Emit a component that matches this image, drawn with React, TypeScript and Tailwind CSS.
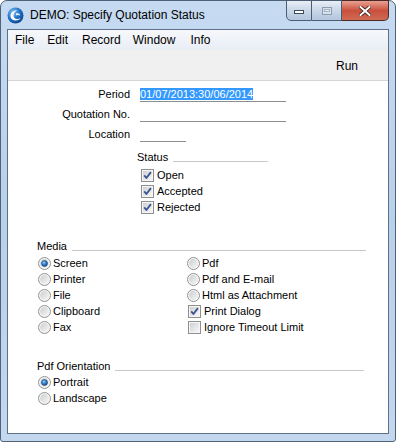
import React from "react";

const ui = "font-['Liberation_Sans',Arial,sans-serif]";

function CheckBox({ checked }: { checked: boolean }) {
  return (
    <svg width="13" height="13" viewBox="0 0 13 13" className="shrink-0">
      <defs>
        <linearGradient id="cbInner" x1="0" y1="0" x2="1" y2="1">
          <stop offset="0" stopColor="#cfd1d3" />
          <stop offset="1" stopColor="#f7f7f7" />
        </linearGradient>
      </defs>
      <rect x="0.5" y="0.5" width="12" height="12" fill="#f6f6f6" stroke="#8e8f8f" />
      <rect x="2" y="2" width="9" height="9" fill="url(#cbInner)" />
      {checked && (
        <path d="M3.2 6.4 L5.4 9 L9.9 3.2" fill="none" stroke="#3f5591" strokeWidth="1.9" strokeLinejoin="round" />
      )}
    </svg>
  );
}

function Radio({ checked }: { checked: boolean }) {
  return (
    <svg width="13" height="13" viewBox="0 0 13 13" className="shrink-0">
      <defs>
        <linearGradient id="rdInner" x1="0" y1="0" x2="1" y2="1">
          <stop offset="0" stopColor="#cbcdcf" />
          <stop offset="1" stopColor="#f6f6f6" />
        </linearGradient>
        <radialGradient id="rdDot" cx="0.4" cy="0.35" r="0.7">
          <stop offset="0" stopColor="#9ed0f5" />
          <stop offset="0.5" stopColor="#2e7dcc" />
          <stop offset="1" stopColor="#124b8a" />
        </radialGradient>
      </defs>
      <circle cx="6.5" cy="6.5" r="6" fill="#f4f4f4" stroke="#929394" />
      <circle cx="6.5" cy="6.5" r="4.4" fill="url(#rdInner)" />
      {checked && <circle cx="6.5" cy="6.5" r="3" fill="url(#rdDot)" stroke="#1b3f6c" strokeWidth="0.6" />}
    </svg>
  );
}

function SectionHead({ title, lineWidth }: { title: string; lineWidth: number }) {
  return (
    <div className="flex items-start h-[13px]">
      <span className="leading-[13px]">{title}</span>
      <div className="h-px bg-[#c8c8c8] mt-[10px] ml-[5px]" style={{ width: lineWidth }} />
    </div>
  );
}

function FieldRow({ label, width, children }: { label: string; width: number; children?: React.ReactNode }) {
  return (
    <div className="flex items-end h-[20px]">
      <span className="w-[122px] text-right leading-[13px] mb-px">{label}</span>
      <div className="ml-[10px] h-[14px] border-b border-[#8d8d8d] leading-[13px]" style={{ width }}>
        {children}
      </div>
    </div>
  );
}

function CheckRow({ label, checked }: { label: string; checked: boolean }) {
  return (
    <div className="flex items-center h-[16px]">
      <CheckBox checked={checked} />
      <span className="ml-[3px] leading-[13px]">{label}</span>
    </div>
  );
}

function RadioRow({ label, checked }: { label: string; checked: boolean }) {
  return (
    <div className="flex items-center h-[16px]">
      <Radio checked={checked} />
      <span className="ml-[2px] leading-[13px]">{label}</span>
    </div>
  );
}

function AppIcon() {
  return (
    <svg width="17" height="17" viewBox="0 0 17 17">
      <defs>
        <radialGradient id="logo" cx="0.35" cy="0.3" r="0.8">
          <stop offset="0" stopColor="#7fc0f5" />
          <stop offset="0.55" stopColor="#1e6fc4" />
          <stop offset="1" stopColor="#0b3f85" />
        </radialGradient>
      </defs>
      <circle cx="8.5" cy="8.5" r="8" fill="url(#logo)" />
      <path d="M3.5 9.5 C3.2 5.5 6.8 3 10.5 3.6 C7.6 4.4 6.2 6.6 6.6 9.2 C7 11.8 10 12.9 13.6 11.3 C11.8 14.2 4 14.6 3.5 9.5 Z" fill="#ffffff" />
      <path d="M9 6.6 C10.8 5.8 13 6.8 13.2 8.6 C12 7.8 10.4 7.6 9 8.4 Z" fill="#e8f3fc" />
    </svg>
  );
}

function CaptionButtons() {
  return (
    <div className="absolute top-[-1px] right-[6px] flex h-[21px]">
      <div className="w-[26px] h-full border border-[#4b5d74] rounded-bl-[5px] bg-gradient-to-b from-[#e8eef6] via-[#c9d7e8] to-[#b3c6dd] flex items-center justify-center">
        <div className="w-[10px] h-[4px] bg-white border border-[#3c4a5c] mt-[3px]" />
      </div>
      <div className="w-[30px] h-full border-y border-r border-[#4b5d74] bg-gradient-to-b from-[#e8eef6] via-[#c9d7e8] to-[#b3c6dd] flex items-center justify-center">
        <div className="w-[10px] h-[8px] border border-[#8e9cb0] bg-[#d7e1ee] flex items-center justify-center">
          <div className="w-[6px] h-[3px] border border-[#a6b3c4] bg-[#e8eef6]" />
        </div>
      </div>
      <div className="w-[47px] h-full border-y border-r border-[#4a2a26] rounded-br-[5px] bg-gradient-to-b from-[#e8a092] via-[#c9503e] to-[#d06a52] flex items-center justify-center">
        <svg width="12" height="10" viewBox="0 0 12 10">
          <path d="M1.5 1 L10.5 9 M10.5 1 L1.5 9" stroke="#3a1f1a" strokeWidth="3.6" strokeLinecap="square" />
          <path d="M1.5 1 L10.5 9 M10.5 1 L1.5 9" stroke="#ffffff" strokeWidth="2" strokeLinecap="square" />
        </svg>
      </div>
    </div>
  );
}

export default function App() {
  return (
    <div className={`${ui} w-[396px] h-[442px] bg-white text-black`}>
      <div className="relative w-[396px] h-[442px] rounded-t-[7px] rounded-b-[3px] border border-[#4f6276] bg-gradient-to-b from-[#c6dbf2] via-[#b9d0ea] to-[#c3d8ef] flex flex-col">
        {/* title bar */}
        <div className="h-[28px] flex items-start shrink-0">
          <div className="ml-[6px] mt-[6px]">
            <AppIcon />
          </div>
          <span className="ml-[6px] mt-[7px] text-[12px] leading-[15px] text-black">DEMO: Specify Quotation Status</span>
        </div>
        <CaptionButtons />

        {/* inner window */}
        <div className="mx-[6px] mb-[7px] flex-1 border border-[#5e7088] flex flex-col bg-white">
          <div className="h-[20px] bg-gradient-to-b from-[#f6f8fb] to-[#e9eef5] flex items-center text-[12px] leading-[15px] shrink-0">
            <span className="ml-[7px]">File</span>
            <span className="ml-[13px]">Edit</span>
            <span className="ml-[14px]">Record</span>
            <span className="ml-[12px]">Window</span>
            <span className="ml-[15px]">Info</span>
          </div>
          <div className="h-[31px] bg-[#f0f0f0] border-b border-[#d5d5d5] flex items-center justify-end shrink-0 text-[12px]">
            <span className="mr-[30px] mt-[1px]">Run</span>
          </div>

          <div className="flex-1 bg-white text-[11px] pt-px">
            <FieldRow label="Period" width={146}>
              <span className="bg-[#3399ff] text-white">01/07/2013:30/06/2014</span>
            </FieldRow>
            <FieldRow label="Quotation No." width={146} />
            <FieldRow label="Location" width={46} />

            <div className="ml-[129px] mt-[9px]">
              <SectionHead title="Status" lineWidth={95} />
              <div className="ml-[4px] mt-[3px]">
                <CheckRow label="Open" checked />
                <CheckRow label="Accepted" checked />
                <CheckRow label="Rejected" checked />
              </div>
            </div>

            <div className="ml-[29px] mt-[25px]">
              <SectionHead title="Media" lineWidth={294} />
              <div className="flex mt-[2px] ml-px">
                <div className="w-[149px]">
                  <RadioRow label="Screen" checked />
                  <RadioRow label="Printer" checked={false} />
                  <RadioRow label="File" checked={false} />
                  <RadioRow label="Clipboard" checked={false} />
                  <RadioRow label="Fax" checked={false} />
                </div>
                <div>
                  <RadioRow label="Pdf" checked={false} />
                  <RadioRow label="Pdf and E-mail" checked={false} />
                  <RadioRow label="Html as Attachment" checked={false} />
                  <div className="ml-px">
                    <CheckRow label="Print Dialog" checked />
                    <CheckRow label="Ignore Timeout Limit" checked={false} />
                  </div>
                </div>
              </div>
            </div>

            <div className="ml-[29px] mt-[25px]">
              <SectionHead title="Pdf Orientation" lineWidth={249} />
              <div className="mt-px ml-px">
                <RadioRow label="Portrait" checked />
                <RadioRow label="Landscape" checked={false} />
              </div>
            </div>
          </div>
        </div>
      </div>
    </div>
  );
}
